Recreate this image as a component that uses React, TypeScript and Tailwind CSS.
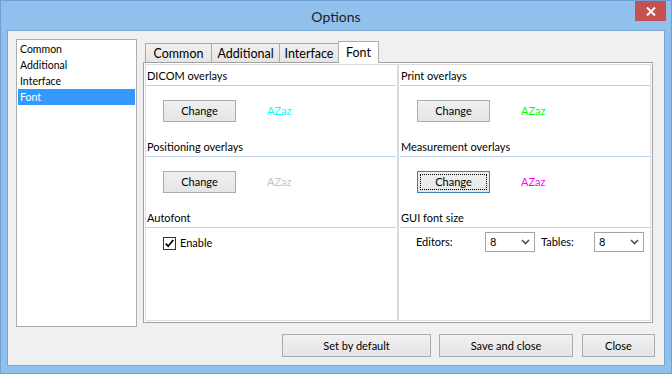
import React from "react";

const FONT = "[font-family:Lato,'Noto_Sans',sans-serif]";

function Btn({
  children,
  className = "",
  focused = false,
}: {
  children: React.ReactNode;
  className?: string;
  focused?: boolean;
}) {
  return (
    <div
      className={`relative flex items-center justify-center border bg-linear-to-b from-[#f0f0f0] to-[#e5e5e5] text-[11px] text-black ${
        focused ? "border-[#3c7fb1]" : "border-[#acacac]"
      } ${className}`}
    >
      {focused && (
        <div className="absolute inset-[2px] border border-dotted border-black" />
      )}
      <span className="relative leading-[16px]">{children}</span>
    </div>
  );
}

function Section({
  title,
  children,
}: {
  title: string;
  children: React.ReactNode;
}) {
  return (
    <div className="h-[71px] flex flex-col">
      <div className="h-[18px] leading-[16px] border-b border-[#bcd2ea] pl-[1px] text-[11px] text-black">
        {title}
      </div>
      {children}
    </div>
  );
}

function Select({ value }: { value: string }) {
  return (
    <div className="w-[50px] h-[20px] border border-[#a5a5a5] bg-white flex items-center justify-between pl-[4px] pr-[4px]">
      <span className="text-[11px] leading-[16px] text-black">{value}</span>
      <svg width="9" height="6" viewBox="0 0 9 6">
        <path d="M1 1 L4.5 4.5 L8 1" fill="none" stroke="#4d4d4d" strokeWidth="1.6" />
      </svg>
    </div>
  );
}

function Tab({
  label,
  width,
  selected = false,
}: {
  label: string;
  width: string;
  selected?: boolean;
}) {
  if (selected) {
    return (
      <div
        className={`${width} h-[22px] -mb-px -ml-px relative z-10 border border-b-0 border-[#acacac] bg-white flex items-start justify-center pt-[2px] text-[12.5px] leading-[17px] text-black`}
      >
        {label}
      </div>
    );
  }
  return (
    <div
      className={`${width} h-[19px] -ml-px border border-b-0 border-[#acacac] bg-linear-to-b from-[#f0f0f0] to-[#e5e5e5] flex items-start justify-center pt-[1px] text-[12.5px] leading-[17px] text-black`}
    >
      {label}
    </div>
  );
}

export default function App() {
  const items = ["Common", "Additional", "Interface", "Font"];
  return (
    <div
      className={`${FONT} w-[672px] h-[374px] bg-[#8fc1ec] border border-[#6f9fd4] flex flex-col px-[6px] pb-[7px] overflow-hidden`}
    >
      {/* Title bar */}
      <div className="relative h-[29px] flex items-center justify-center">
        <span className="text-[14px] leading-[20px] text-[#1e1e1e] mt-[2px]">Options</span>
        <div className="absolute right-[-1px] top-0 w-[31px] h-[20px] bg-[#c75050] flex items-center justify-center">
          <svg width="10" height="9" viewBox="0 0 10 9">
            <path d="M1 0.5 L9 8.5 M9 0.5 L1 8.5" stroke="white" strokeWidth="2" />
          </svg>
        </div>
      </div>

      {/* Client area */}
      <div className="flex-1 border border-[#7ba3cf] bg-[#f0f0f0] flex flex-col pt-[8px] pl-[8px] pr-[11px] pb-[8px]">
        <div className="h-[288px] flex">
          {/* Left list */}
          <div className="w-[121px] h-[288px] border border-[#abadb3] bg-white p-px">
            {items.map((it) => (
              <div
                key={it}
                className={`h-[16px] leading-[16px] pl-[2px] text-[10.5px] ${
                  it === "Font" ? "bg-[#3399ff] text-white" : "text-black"
                }`}
              >
                {it}
              </div>
            ))}
          </div>

          {/* Tabs */}
          <div className="ml-[6px] mt-[2px] w-[510px] flex flex-col">
            <div className="h-[21px] flex items-end pl-[3px]">
              <Tab label="Common" width="w-[67px]" />
              <Tab label="Additional" width="w-[69px]" />
              <Tab label="Interface" width="w-[60px]" />
              <Tab label="Font" width="w-[41px]" selected />
            </div>
            <div className="h-[261px] border border-[#a0a0a0] bg-white p-px">
              <div className="h-full border border-[#dcdcdc] flex">
                {/* Left column */}
                <div className="w-[251px] flex flex-col pt-[3px] pr-[1px]">
                  <Section title="DICOM overlays">
                    <div className="mt-[14px] pl-[17px] flex items-center">
                      <Btn className="w-[73px] h-[22px]">Change</Btn>
                      <span className="ml-[31px] text-[11px] text-[#00ffff]">AZaz</span>
                    </div>
                  </Section>
                  <Section title="Positioning overlays">
                    <div className="mt-[14px] pl-[17px] flex items-center">
                      <Btn className="w-[73px] h-[22px]">Change</Btn>
                      <span className="ml-[31px] text-[11px] text-[#c3c3c3]">AZaz</span>
                    </div>
                  </Section>
                  <Section title="Autofont">
                    <div className="mt-[8px] pl-[17px] flex items-center">
                      <div className="w-[13px] h-[13px] border border-[#333333] bg-white flex items-center justify-center">
                        <svg width="11" height="11" viewBox="0 0 11 11">
                          <path d="M1.8 5.6 L4.2 8.2 L9.2 2" fill="none" stroke="#000" strokeWidth="1.8" />
                        </svg>
                      </div>
                      <span className="ml-[4px] -mt-[1px] text-[11px] leading-[16px] text-black">Enable</span>
                    </div>
                  </Section>
                </div>
                {/* Divider */}
                <div className="w-[2px] bg-[#dadada]" />
                {/* Right column */}
                <div className="w-[251px] flex flex-col pt-[3px] pl-[1px]">
                  <Section title="Print overlays">
                    <div className="mt-[14px] pl-[17px] flex items-center">
                      <Btn className="w-[73px] h-[22px]">Change</Btn>
                      <span className="ml-[31px] text-[11px] text-[#00ff00]">AZaz</span>
                    </div>
                  </Section>
                  <Section title="Measurement overlays">
                    <div className="mt-[14px] pl-[17px] flex items-center">
                      <Btn className="w-[73px] h-[22px]" focused>
                        Change
                      </Btn>
                      <span className="ml-[31px] text-[11px] text-[#ff00ff]">AZaz</span>
                    </div>
                  </Section>
                  <Section title="GUI font size">
                    <div className="mt-[4px] pl-[16px] flex items-center">
                      <span className="w-[69px] text-[11px] leading-[16px] text-black">Editors:</span>
                      <Select value="8" />
                      <span className="ml-[6px] w-[53px] text-[11px] leading-[16px] text-black">Tables:</span>
                      <Select value="8" />
                    </div>
                  </Section>
                </div>
              </div>
            </div>
          </div>
        </div>

        {/* Bottom buttons */}
        <div className="mt-[7px] -mr-[2px] flex justify-end">
          <Btn className="w-[149px] h-[23px]">Set by default</Btn>
          <Btn className="ml-[8px] w-[134px] h-[23px]">Save and close</Btn>
          <Btn className="ml-[9px] w-[73px] h-[23px]">Close</Btn>
        </div>
      </div>
    </div>
  );
}
